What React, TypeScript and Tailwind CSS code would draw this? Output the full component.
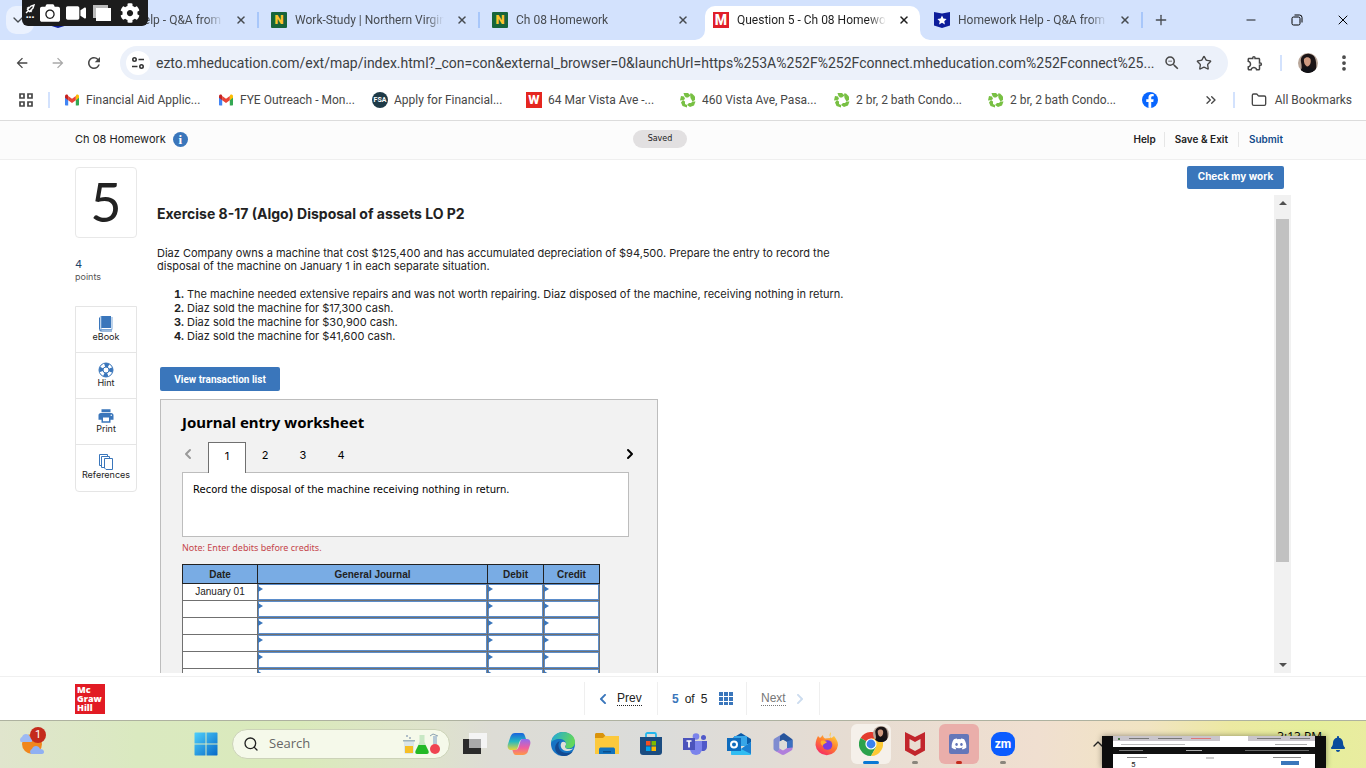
import React, { useState } from 'react';
import { clsx } from 'clsx';
import { ChevronDown, ChevronUp, ChevronsRight, EllipsisVertical, Folder, Minus, Plus, Search, Star, X } from 'lucide-react';
import { FaBell, FaCamera, FaChevronLeft, FaChevronRight, FaCog, FaDiscord, FaFacebookF, FaVideo } from 'react-icons/fa';
import { MdArrowBack, MdArrowForward, MdOutlineExtension, MdPrint, MdRefresh, MdZoomOut } from 'react-icons/md';

/* ---------- favicons and small logos ---------- */

const StarBadge = () => (
  <svg viewBox="0 0 16 16" className="size-4 shrink-0">
    <path d="M0 0l8 1.5L16 0v13.5L8 16l-8-2.5z" fill="#0d1d9b" />
    <path d="M8 3.6l1.4 3 3.2.4-2.3 2.2.6 3.2L8 10.8l-2.9 1.6.6-3.2L3.4 7l3.2-.4z" fill="#fff" />
  </svg>
);

const NovaBadge = () => (
  <span className="flex size-4 shrink-0 items-center justify-center rounded-[1px] bg-[#17653a] text-[13px] leading-4 font-black text-[#fdc52c]">N</span>
);

const McGrawBadge = () => (
  <span className="flex size-4 shrink-0 items-center justify-center bg-[#e01f29] text-[14px] leading-4 font-extrabold text-white">M</span>
);

const Gmail = () => (
  <svg viewBox="0 0 16 16" className="size-4 shrink-0">
    <path d="M1 4.5v8.3c0 .5.3.7.7.7h2.5V7.6z" fill="#4285f4" />
    <path d="M15 4.5v8.3c0 .5-.3.7-.7.7h-2.5V7.6z" fill="#34a853" />
    <path d="M11.8 4v4.2L15 5.8V4.2c0-1.5-1.7-2.2-2.8-1.3z" fill="#fbbc04" />
    <path d="M4.2 8.2V4L8 6.8 11.800 4v4.2L8 11z" fill="#ea4335" />
    <path d="M1 4.2v1.6l3.2 2.4V4l-.4-1.100C2.700 2 1 2.700 1 4.2z" fill="#c5221f" />
  </svg>
);

const Fsa = () => (
  <span className="flex size-4 shrink-0 items-center justify-center rounded-full bg-[#1e3a47] text-[7px] leading-4 font-bold text-white">FSA</span>
);

const RedW = () => (
  <span className="flex size-4 shrink-0 items-center justify-center bg-[#e5261f] text-[13px] leading-4 font-extrabold text-white">W</span>
);

const GreenRing = () => (
  <svg viewBox="0 0 16 16" className="size-4 shrink-0" fill="#78c043">
    <path d="M3.500 1H8l2.500 2.500-2.500 2H6L4.500 4z" />
    <path d="M10 1.500h2l3 3V8l-2.500 1.500L10.500 6z" />
    <path d="M15.500 9.500L14 13.500 10 15l-3-2 2-2h2l1.500-1.500z" />
    <path d="M7 15.500L2.500 14 1 10.500 3 8l2 1.500V12l2 1z" />
    <path d="M0 8.500L1 4l3 .5L5 7 3.500 8z" />
  </svg>
);

const Facebook = () => (
  <span className="flex size-4 shrink-0 items-end justify-center overflow-hidden rounded-full bg-[#0866ff]">
    <FaFacebookF className="size-3.5 text-white" />
  </span>
);

const Avatar = ({ className }: { className: string }) => (
  <svg viewBox="0 0 20 20" className={clsx('rounded-full', className)}>
    <rect width="20" height="20" fill="#b9a79a" />
    <path d="M3 9C2 3 7 0 12 1c6 1 7 8 6 19H2c2-3 2-7 1-11z" fill="#1b1416" />
    <path d="M6 6c2-2.500 5-2 6.500 0 .7 3 0 6.500-3 7.500C7 13 5.500 9.500 6 6z" fill="#cf9a80" />
    <path d="M2 20c0-4 3-6 7-6s8 2 9 6z" fill="#111217" />
  </svg>
);

/* ---------- browser chrome ---------- */

const tabs = [
  { title: 'Homework Help - Q&A from Online', icon: <StarBadge />, active: false },
  { title: 'Work-Study | Northern Virginia Com', icon: <NovaBadge />, active: false },
  { title: 'Ch 08 Homework', icon: <NovaBadge />, active: false },
  { title: 'Question 5 - Ch 08 Homework - C', icon: <McGrawBadge />, active: true },
  { title: 'Homework Help - Q&A from Online', icon: <StarBadge />, active: false },
];

const bookmarks = [
  { label: 'Financial Aid Applic...', icon: <Gmail /> },
  { label: 'FYE Outreach - Mon...', icon: <Gmail /> },
  { label: 'Apply for Financial...', icon: <Fsa /> },
  { label: '64 Mar Vista Ave -...', icon: <RedW /> },
  { label: '460 Vista Ave, Pasa...', icon: <GreenRing /> },
  { label: '2 br, 2 bath Condo...', icon: <GreenRing /> },
  { label: '2 br, 2 bath Condo...', icon: <GreenRing /> },
];

const TabStrip = () => (
  <div className="relative flex h-10 shrink-0 items-stretch bg-[#d3e2fd] text-[#474b50]">
    <button aria-label="Search tabs" className="mt-1.5 ml-1.5 flex size-7 shrink-0 items-center justify-center rounded-[10px] bg-[#eaf1fe]">
      <ChevronDown className="mr-1 size-4" />
    </button>
    <div className="ml-1 flex min-w-0 flex-1 pt-1.5">
      {tabs.map((tab, i) => (
        <div
          key={i}
          className={clsx('relative isolate flex w-[221px] min-w-0 items-center px-3 pb-1.5', tab.active && 'text-[#1f1f1f]')}
        >
          {tab.icon}
          <span className="ml-2 min-w-0 flex-1 overflow-hidden mask-r-from-88% text-xs leading-5 whitespace-nowrap">{tab.title}</span>
          <button aria-label={`Close ${tab.title}`} className="ml-3 shrink-0">
            <X className="size-3" strokeWidth={3} />
          </button>
          {tab.active && (
            <span className="absolute inset-y-0 right-0.5 left-1 -z-10 rounded-t-[10px] bg-white">
              <svg viewBox="0 0 10 10" className="absolute bottom-0 -left-2.5 size-2.5"><path d="M10 0v10H0A10 10 0 0 0 10 0z" fill="#fff" /></svg>
              <svg viewBox="0 0 10 10" className="absolute -right-2.5 bottom-0 size-2.5"><path d="M0 0v10h10A10 10 0 0 1 0 0z" fill="#fff" /></svg>
            </span>
          )}
          {(i === 0 || i === 1 || i === 4) && <span className="absolute top-1.5 right-0 h-4 w-0.5 bg-[#a8c7fa]" />}
        </div>
      ))}
      <button aria-label="New tab" className="flex w-9 shrink-0 items-center justify-center pb-1.5">
        <Plus className="size-4" />
      </button>
    </div>
    <div className="flex shrink-0 text-black">
      <button aria-label="Minimize" className="flex w-[46px] items-center justify-center"><Minus className="size-3.5" strokeWidth={1.5} /></button>
      <button aria-label="Restore" className="flex w-[46px] items-center justify-center">
        <svg viewBox="0 0 12 12" className="size-3" fill="none" stroke="currentColor">
          <rect x="1" y="3" width="8" height="8" rx="1.500" />
          <path d="M3.500 1h5A2.500 2.500 0 0 1 11 3.500v5" />
        </svg>
      </button>
      <button aria-label="Close" className="flex w-[46px] items-center justify-center"><X className="size-4" strokeWidth={1.5} /></button>
    </div>

    {/* floating screen recorder */}
    <div className="absolute top-0 left-[22px] z-10 flex h-[26px] w-[126px] items-center rounded-b-md bg-[#1c1c1c] text-white">
      <span className="flex w-4 flex-col items-center">
        <svg viewBox="0 0 10 10" className="size-2.5" fill="none" stroke="#fff"><path d="M1 9l2-2M2.500 5.500L6 2l3-1-1 3-3.500 3.500zM2 4.500L4 3M5.500 8L7 6" strokeWidth="1.400" /></svg>
        <span className="text-[8px] leading-2 font-bold">•••</span>
      </span>
      <button aria-label="Take photo" className="ml-0.5 flex w-5 justify-center"><FaCamera className="size-5" /></button>
      <button aria-label="Record video" className="ml-1.5 flex w-5 justify-center"><FaVideo className="size-5" /></button>
      <button aria-label="Gallery" className="ml-1.5 flex w-5 justify-center">
        <svg viewBox="0 0 20 18" className="h-[18px] w-5"><path d="M1 1h15v3H4v10H1z" fill="#bbb" /><path d="M4 4h15v13H4z" fill="#fff" /></svg>
      </button>
      <button aria-label="Settings" className="ml-2 flex w-5 justify-center"><FaCog className="size-5" /></button>
    </div>
  </div>
);

const Toolbar = () => (
  <div className="flex h-[46px] shrink-0 items-center bg-white pl-1 text-[#474747]">
    <button aria-label="Back" className="flex w-9 justify-center"><MdArrowBack className="size-4" /></button>
    <button aria-label="Forward" className="flex w-9 justify-center text-[#a9a9a9]"><MdArrowForward className="size-4" /></button>
    <button aria-label="Reload" className="flex w-9 justify-center"><MdRefresh className="size-[18px]" /></button>
    <div className="ml-2 flex h-[34px] min-w-0 flex-1 items-center rounded-full bg-[#ecf1fa] pr-2 pl-1.5">
      <button aria-label="Site information" className="flex size-6 shrink-0 items-center justify-center rounded-full bg-white">
        <svg viewBox="0 0 14 14" className="size-3.5" fill="none" stroke="#333" strokeWidth="1.600">
          <circle cx="3.500" cy="3.500" r="1.700" /><path d="M7.500 3.500H13M1 10.500h5.500" /><circle cx="10.500" cy="10.500" r="1.700" />
        </svg>
      </button>
      <input
        aria-label="Address"
        className="ml-1.5 min-w-0 flex-1 bg-transparent text-sm text-[#3c4043] outline-none"
        defaultValue="ezto.mheducation.com/ext/map/index.html?_con=con&external_browser=0&launchUrl=https%253A%252F%252Fconnect.mheducation.com%252Fconnect%25..."
      />
      <button aria-label="Zoom" className="flex w-8 shrink-0 justify-center"><MdZoomOut className="size-[18px]" /></button>
      <button aria-label="Bookmark this page" className="flex w-8 shrink-0 justify-center"><Star className="size-4" /></button>
    </div>
    <button aria-label="Extensions" className="ml-4 flex w-[22px] justify-center"><MdOutlineExtension className="size-[18px]" /></button>
    <span className="ml-[14px] h-4 w-0.5 bg-[#d3e2fd]" />
    <button aria-label="Profile" className="ml-4"><Avatar className="size-5" /></button>
    <button aria-label="Menu" className="mr-3 ml-4"><EllipsisVertical className="size-5" strokeWidth={2.5} /></button>
  </div>
);

const BookmarkBar = () => (
  <div className="flex h-[34px] shrink-0 items-center bg-white pb-1.5 text-xs text-[#474747]">
    <button aria-label="Apps" className="ml-[18px]">
      <svg viewBox="0 0 16 16" className="size-4" fill="none" stroke="#474747" strokeWidth="1.700"><path d="M2 2h4v4H2zM10 2h4v4h-4zM2 10h4v4H2zM10 10h4v4h-4z" /></svg>
    </button>
    <span className="ml-3.5 h-4 w-0.5 bg-[#d3e2fd]" />
    <div className="ml-3.5 flex min-w-0 flex-1 overflow-hidden">
      {bookmarks.map((item, i) => (
        <a key={i} href="#" className="flex w-[154px] shrink-0 items-center gap-1.5 whitespace-nowrap">
          {item.icon}
          {item.label}
        </a>
      ))}
      <a href="#" aria-label="Facebook"><Facebook /></a>
    </div>
    <button aria-label="More bookmarks"><ChevronsRight className="size-4" /></button>
    <span className="ml-3.5 h-4 w-0.5 bg-[#d3e2fd]" />
    <button className="mr-3.5 ml-4 flex items-center gap-2 whitespace-nowrap">
      <Folder className="size-4" />
      All Bookmarks
    </button>
  </div>
);

/* ---------- assignment ---------- */

const AssignmentHeader = () => (
  <header className="flex h-10 shrink-0 items-center border-t border-b border-t-[#dcdcdc] border-b-[#efefef] bg-[#fcfcfc] px-[75px] pb-0.5 text-[#222]">
    <div className="flex flex-1 items-center gap-[7px] text-[11px]">
      Ch 08 Homework
      <button aria-label="Assignment information" className="flex size-[15px] items-center justify-center rounded-full bg-[#3a76bb] font-['Liberation_Serif',serif] text-[13px] leading-none font-bold text-white">i</button>
    </div>
    <span className="mr-[38px] rounded-full bg-[#e2e0e1] px-[15px] font-['DejaVu_Sans',sans-serif] text-[8px] leading-[18px]">Saved</span>
    <nav className="flex flex-1 items-center justify-end pr-2 text-[10px] font-semibold">
      <a href="#" className="pr-2">Help</a>
      <a href="#" className="border-x border-[#e6e6e6] px-2.5">Save &amp; Exit</a>
      <a href="#" className="pl-2.5 text-[#124a8a]">Submit</a>
    </nav>
  </header>
);

const EbookIcon = () => (
  <svg viewBox="0 0 16 16" className="size-4"><path d="M3 0h10v12H3z" fill="#3a76bb" /><path d="M3 0v15M2 13.500h12V1" fill="none" stroke="#7fa9d8" /><path d="M1.500 1.500v12a1.500 1.500 0 0 0 1.500 1.500h11" fill="none" stroke="#3a76bb" /></svg>
);
const HintIcon = () => (
  <svg viewBox="0 0 16 16" className="size-4" fill="none" stroke="#3a76bb">
    <circle cx="8" cy="8" r="7" strokeWidth="1" /><circle cx="8" cy="8" r="3" strokeWidth="1" />
    <circle cx="8" cy="8" r="5" strokeWidth="4" strokeDasharray="3.927 3.927" transform="rotate(-22.5 8 8)" />
  </svg>
);
const ReferencesIcon = () => (
  <svg viewBox="0 0 16 16" className="size-4" stroke="#3a76bb" fill="#fff"><path d="M1.500.5h8v11h-8z" /><path d="M3.500 2.500h8v11h-8z" /><path d="M6.500 4.500H14.500v11h-6.500l-1.500-1.500z" /></svg>
);

const tools = [
  { label: 'eBook', icon: <EbookIcon /> },
  { label: 'Hint', icon: <HintIcon /> },
  { label: 'Print', icon: <MdPrint className="size-[18px] text-[#3a76bb]" /> },
  { label: 'References', icon: <ReferencesIcon /> },
];

const QuestionSidebar = () => (
  <aside className="w-[62px] shrink-0 pt-[7px] text-[#222]">
    <div className="flex h-[71px] items-center justify-center rounded border border-[#e8e8e8] pb-0.5 font-['Lato',sans-serif] text-[54px] leading-none">5</div>
    <div className="mt-5 text-[11px] leading-3 text-[#1d4268]">4</div>
    <div className="text-[9px] leading-[14px] text-[#555]">points</div>
    <div className="mt-[22px] rounded-b border border-[#e5e5e5]">
      {tools.map((tool) => (
        <button key={tool.label} className="flex h-[46px] w-full flex-col items-center justify-center border-b border-[#e5e5e5] pb-0.5 text-[9px] leading-[10px] last:border-b-0">
          <span className="flex h-4 items-center">{tool.icon}</span>
          {tool.label}
        </button>
      ))}
    </div>
  </aside>
);

const situations = [
  'The machine needed extensive repairs and was not worth repairing. Diaz disposed of the machine, receiving nothing in return.',
  'Diaz sold the machine for $17,300 cash.',
  'Diaz sold the machine for $30,900 cash.',
  'Diaz sold the machine for $41,600 cash.',
];

const columns = ['General Journal', 'Debit', 'Credit'];
const rows = ['January 01', '', '', '', '', ''];

const EntryCell = ({ label }: { label: string }) => (
  <td className="border border-[#707070] p-0">
    <div className="relative">
      <input aria-label={label} className="block h-4 w-full border border-[#5b8dcb] bg-white px-2 text-[9px] outline-none" />
      <svg viewBox="0 0 5 6" className="absolute top-0.5 left-0 h-1.5 w-[5px]"><path d="M0 0l5 3-5 3z" fill="#3a76bb" /></svg>
    </div>
  </td>
);

const Worksheet = () => {
  const [step, setStep] = useState(1);

  return (
    <section className="mt-2 ml-[3px] w-[498px] border border-[#bdbdbd] bg-[#f2f2f2] px-[21px] pt-[11px]">
      <h3 className="font-['Noto_Sans',sans-serif] text-[15px] leading-[22px] font-bold text-black">Journal entry worksheet</h3>
      <div className="mt-[9px] flex h-[30px] items-center text-[11px] text-black">
        <button aria-label="Previous entry" className="w-[26px] pb-1.5 text-[#9a9a9a]"><ChevronDown className="-ml-0.5 size-4 rotate-90" strokeWidth={3} /></button>
        {[1, 2, 3, 4].map((n) => (
          <button
            key={n}
            onClick={() => setStep(n)}
            className={clsx(
              'w-[38px] pb-1',
              step === n && 'relative -mb-px h-[31px] border border-b-0 border-[#707070] bg-white'
            )}
          >
            {n}
          </button>
        ))}
        <button aria-label="Next entry" className="-mr-0.5 ml-auto pb-1.5"><ChevronDown className="size-4 -rotate-90" strokeWidth={3} /></button>
      </div>
      <div className="mr-[7px] h-[65px] border border-[#bdbdbd] bg-white px-2.5 pt-2.5 font-['DejaVu_Sans',sans-serif] text-[10px] leading-[14px] text-black">
        Record the disposal of the machine receiving nothing in return.
      </div>
      <p className="mt-1 font-['Noto_Sans',sans-serif] text-[9px] leading-[14px] text-[#c5464b]">Note: Enter debits before credits.</p>
      <table className="mt-[9px] w-[418px] table-fixed border-collapse border border-[#707070] font-['Liberation_Sans',sans-serif] text-[10px] text-[#222]">
        <thead>
          <tr className="h-[19px] bg-[#79ace4]">
            <th className="w-[75px] border border-[#222] p-0 font-bold">Date</th>
            {columns.map((name, i) => (
              <th key={name} className={clsx('border border-[#222] p-0 font-bold', i > 0 && 'w-14')}>{name}</th>
            ))}
          </tr>
        </thead>
        <tbody>
          {rows.map((date, i) => (
            <tr key={i}>
              <td className="border border-[#707070] bg-white p-0 text-center leading-4">{date}</td>
              {columns.map((name) => (
                <EntryCell key={name} label={`${name}, row ${i + 1}`} />
              ))}
            </tr>
          ))}
        </tbody>
      </table>
    </section>
  );
};

const Question = () => (
  <main className="flex min-h-0 flex-1 bg-white px-[75px]">
    <QuestionSidebar />
    <div className="ml-5 flex min-h-0 min-w-0 flex-1 flex-col pb-[3px]">
      <div className="flex h-[35px] shrink-0 items-start justify-end pt-1.5 pr-[7px]">
        <button className="h-[23px] w-[97px] rounded-xs bg-[#3a76bb] pb-0.5 text-[10px] font-bold text-white">Check my work</button>
      </div>
      <div className="flex min-h-0 flex-1">
        <div className="min-w-0 flex-1 overflow-hidden pt-[9px] text-[#222]">
          <h2 className="text-sm leading-5 font-bold">Exercise 8-17 (Algo) Disposal of assets LO P2</h2>
          <p className="mt-[23px] max-w-[700px] text-[11px] leading-[13px]">
            Diaz Company owns a machine that cost $125,400 and has accumulated depreciation of $94,500. Prepare the entry to record the disposal of the machine on January 1 in each separate situation.
          </p>
          <ol className="mt-[14px] ml-[30px] list-outside list-decimal text-[11px] leading-[14px] marker:font-bold">
            {situations.map((text) => (
              <li key={text}>{text}</li>
            ))}
          </ol>
          <button className="mt-6 ml-[3px] block h-6 w-[120px] rounded-xs bg-[#3a76bb] font-['Roboto',sans-serif] text-[10px] font-bold text-white">View transaction list</button>
          <Worksheet />
        </div>
        <div className="flex w-[17px] shrink-0 flex-col items-center bg-[#f1f1f1] py-1.5">
          <svg viewBox="0 0 8 4" className="h-1 w-2"><path d="M4 0l4 4H0z" fill="#505050" /></svg>
          <div className="mt-3.5 h-[343px] w-[13px] bg-[#c1c1c1]" />
          <svg viewBox="0 0 8 4" className="mt-auto h-1 w-2"><path d="M0 0h8L4 4z" fill="#505050" /></svg>
        </div>
      </div>
    </div>
  </main>
);

const AssignmentFooter = () => (
  <footer className="flex h-11 shrink-0 items-center border-t border-[#f0f0f0] bg-white px-[75px] font-['Liberation_Sans',sans-serif] text-xs text-[#222]">
    <div className="flex-1">
      <div className="flex size-[30px] flex-col justify-center bg-[#e21b24] pl-0.5 font-['Open_Sans',sans-serif] text-[9px] leading-[9px] font-extrabold text-white">
        <span>Mc</span>
        <span>Graw</span>
        <span>Hill</span>
      </div>
    </div>
    <nav className="ml-[38px] flex h-[33px] divide-x divide-[#efefef] border-x border-[#efefef]">
      <button className="flex w-[73px] items-center gap-2 pl-3">
        <FaChevronLeft className="size-3 text-[#3a76bb]" />
        <span className="border-b border-dotted border-[#222] leading-[14px]">Prev</span>
      </button>
      <div className="flex w-[89px] items-center gap-1.5 pl-3.5">
        <b className="text-[#3a76bb]">5</b> of <span>5</span>
        <button aria-label="Question list" className="ml-1.5">
          <svg viewBox="0 0 14 14" className="size-3.5" fill="#3a76bb"><path d="M0 0h4v4H0zM5 0h4v4H5zM10 0h4v4h-4zM0 5h4v4H0zM5 5h4v4H5zM10 5h4v4h-4zM0 10h4v3H0zM5 10h4v3H5zM10 10h4v3h-4z" /></svg>
        </button>
      </div>
      <button className="flex w-[72px] items-center gap-2 pl-3.5 text-[#777]">
        <span className="border-b border-dotted border-[#777] leading-[14px]">Next</span>
        <FaChevronRight className="size-3 text-[#ccdcef]" />
      </button>
    </nav>
    <div className="flex-1" />
  </footer>
);

/* ---------- taskbar ---------- */

const TaskView = () => (
  <svg viewBox="0 0 24 24" className="size-6"><path d="M6 1h18v15H6z" fill="#f4f4f4" /><path d="M0 7h18v15H0z" fill="#2b2b2b" /><path d="M6 7h12v9H6z" fill="#aaa" /></svg>
);

const Copilot = () => (
  <svg viewBox="0 0 24 24" className="size-6">
    <defs>
      <linearGradient id="copA" x1="0" y1="0" x2="0" y2="1"><stop stopColor="#1a63dd" /><stop offset=".5" stopColor="#26b8c0" /><stop offset="1" stopColor="#e8d53a" /></linearGradient>
      <linearGradient id="copB" x1="0" y1="0" x2="0" y2="1"><stop stopColor="#8f6bf0" /><stop offset=".55" stopColor="#ee5fa0" /><stop offset="1" stopColor="#ff9a45" /></linearGradient>
    </defs>
    <path d="M8 1h7c2 0 2.500 1.500 3 3l1 3h-3c-2 0-3 1-4 4l-1.500 5C10 18 9 18 7 18H4c-3 0-4-3-3-6l2.500-7.500C4.500 2 6 1 8 1z" fill="url(#copA)" />
    <path d="M16 23H9c-2 0-2.500-1.500-3-3l-.6-2H8c2 0 3-1 4-4l1.500-5C14 7 15 7 17 7h3c3 0 4 3 3 6l-2.500 7.500C19.500 22 18 23 16 23z" fill="url(#copB)" />
  </svg>
);

const Edge = () => (
  <svg viewBox="0 0 24 24" className="size-6">
    <defs>
      <linearGradient id="edgeA" x1="0" y1="0" x2="1" y2=".3"><stop stopColor="#1fa7e0" /><stop offset="1" stopColor="#63d75a" /></linearGradient>
    </defs>
    <circle cx="12" cy="12" r="12" fill="#1573c4" />
    <path d="M0 11C1 4 6 0 12 0c8 0 12 5.500 12 10 0 4-3 6.500-6.500 6.500-2 0-3.500-.7-3.500-1.600 0-.7 1-1 1-2.900C15 9 12 7 8.500 7 4 7 1 9 0 11z" fill="url(#edgeA)" />
    <path d="M9 9c-3 3-2 12 7 12 2.500 0 4.500-.6 6-1.700C19 24 13 25 9 23 2 20 3 11 9 9z" fill="#134a91" />
    <path d="M10.500 10.500c-2.500 4 1 9 6 8.500 3 0 5-1.500 6.500-3-2 1.300-9 2-9-1.300 0-1 1-1.200 1-2.700 0-2-3-3-4.500-1.500z" fill="#dfe0d9" />
  </svg>
);

const Explorer = () => (
  <svg viewBox="0 0 24 24" className="size-6"><path d="M0 2.500C0 1.700.6 1 1.500 1H8l2.500 3H22v5H0z" fill="#d9930c" /><path d="M0 6h8l2-2h14v18H0z" fill="#fcc93c" /><path d="M4 17.500c0-1.500 1-2 2-2h12c1 0 2 .5 2 2V22H4z" fill="#1272bd" /><path d="M8 19h8v1.500H8z" fill="#0a4d8c" /></svg>
);

const Store = () => (
  <svg viewBox="0 0 24 24" className="size-6"><path d="M7 6V2.500C7 1.600 7.600 1 8.500 1h7c.9 0 1.500.6 1.500 1.500V6" fill="none" stroke="#22b7ee" strokeWidth="1.800" /><path d="M1 5h22v15c0 2-1 3-3 3H4c-2 0-3-1-3-3z" fill="#1b4c80" /><path d="M7 9h4.500v4.500H7z" fill="#f25022" /><path d="M12.500 9H17v4.500h-4.500z" fill="#7fba00" /><path d="M7 14.500h4.500V19H7z" fill="#00a4ef" /><path d="M12.500 14.500H17V19h-4.500z" fill="#ffb900" /></svg>
);

const Teams = () => (
  <svg viewBox="0 0 24 24" className="size-6"><circle cx="13" cy="4.500" r="3.300" fill="#7b83eb" /><circle cx="20.500" cy="5.500" r="2.500" fill="#5059c9" /><path d="M16 9h8v6a4 4 0 0 1-6 3.500z" fill="#5059c9" /><path d="M7 9h12v8a6 6 0 0 1-12 0z" fill="#7b83eb" /><path d="M0 6h12v12H0z" fill="#4b53bc" /><path d="M3.500 9h5M6 9v6.500" stroke="#fff" strokeWidth="1.700" /></svg>
);

const Outlook = () => (
  <svg viewBox="0 0 24 24" className="size-6"><path d="M4 7l10-6 10 6v5H4z" fill="#0a5ba8" /><path d="M7 4h13v10H7z" fill="#37a6e8" /><path d="M4 11l10 6 10-7v12c0 .6-.4 1-1 1H5c-.6 0-1-.4-1-1z" fill="#31bdf2" /><path d="M14 17l10-7v12z" fill="#1b7fd1" /><path d="M0 6h14v13H0z" fill="#0f6cbd" /><circle cx="7" cy="12.500" r="3" fill="none" stroke="#fff" strokeWidth="2" /></svg>
);

const Microsoft365 = () => (
  <svg viewBox="0 0 24 24" className="size-6">
    <path d="M13 1L4 6.200C3 6.800 2.500 7.500 2.500 8.500v8c0 1 .5 1.600 1.500 2.200l1.500.8c2 0 3-1 3-3V9.500L16 5z" fill="#7f8cd0" />
    <path d="M12 1.500L9 4v5.500L12 8l4 2.500v6l5.500-1V8.500c0-1-.5-1.700-1.500-2.300L13.500 1.500z" fill="#27559c" />
    <path d="M21.500 14v2.500c0 1-.5 1.700-1.500 2.200l-6.500 3.800c-1 .6-2 .6-3 0L4 18.700c2 1 4.500 0 4.500-2.200l3.500 2 4-2.500z" fill="#b07fdc" />
    <path d="M8.500 9.700L12 7.700l4 2.300v5.500l-4 2.500-3.500-2z" fill="#dddcd8" />
    <path d="M16 9.500l5.500-2v8L16 16z" fill="#3b6fc0" />
  </svg>
);

const Firefox = () => (
  <svg viewBox="0 0 24 24" className="size-6">
    <defs><linearGradient id="ffA" x1=".8" y1="0" x2=".2" y2="1"><stop stopColor="#ffe03d" /><stop offset=".5" stopColor="#ff7b2e" /><stop offset="1" stopColor="#f5226b" /></linearGradient></defs>
    <path d="M16 0c-2 2-2 4 0 6 2-1 2-1 3-2 2 3 4 5 4 9a11.300 11.300 0 0 1-22.500 0C.5 9 2 6 3 4l2 2 3-3c0 1.500.5 2.500 2 3.500L15 6z" fill="url(#ffA)" />
    <circle cx="12.500" cy="13" r="4.800" fill="#7b3be0" /><path d="M6 9c2-1 4 0 6 1-1 2-4 1-4 4-2-1-3-3-2-5z" fill="#ffb02e" />
  </svg>
);

const Chrome = () => (
  <span className="relative">
    <svg viewBox="0 0 24 24" className="size-6"><path d="M12 12L1.600 6A12 12 0 0 1 22.400 6z" fill="#e33b2e" /><path d="M12 12L1.600 6A12 12 0 0 0 12 24l5-9z" fill="#2ba24c" /><path d="M12 12l10.400-6A12 12 0 0 1 12 24l5.200-9z" fill="#fcc934" /><path d="M12 6.500h10.600L12 12z" fill="#fcc934" /><circle cx="12" cy="12" r="5.600" fill="#fff" /><circle cx="12" cy="12" r="4.400" fill="#3b82f0" /></svg>
    <Avatar className="absolute -top-1.5 -right-1.5 size-4" />
  </span>
);

const McAfee = () => (
  <svg viewBox="0 0 24 24" className="size-6"><path d="M2 0l10 5L22 0v18.500L12 24 2 18.500zM6.500 7v9L12 19l5.500-3V7L12 10z" fill="#c2252c" fillRule="evenodd" /></svg>
);

const Discord = () => (
  <span className="flex size-5 items-center justify-center rounded-xs bg-[#6577b9]"><FaDiscord className="size-4 text-white" /></span>
);

const Zoom = () => (
  <span className="flex size-6 items-center justify-center rounded-[9px] bg-[#0b5cff] text-[12px] leading-none font-bold text-white">zm</span>
);

const apps = [
  { name: 'Task view', icon: <TaskView /> },
  { name: 'Copilot', icon: <Copilot /> },
  { name: 'Edge', icon: <Edge /> },
  { name: 'File Explorer', icon: <Explorer /> },
  { name: 'Store', icon: <Store /> },
  { name: 'Teams', icon: <Teams /> },
  { name: 'Outlook', icon: <Outlook /> },
  { name: 'Microsoft 365', icon: <Microsoft365 /> },
  { name: 'Firefox', icon: <Firefox /> },
  { name: 'Chrome', icon: <Chrome />, box: 'bg-[#f5f0ea]', dot: 'w-4 bg-[#0a78d4]' },
  { name: 'McAfee', icon: <McAfee />, dot: 'w-1.5 bg-[#8a857c]' },
  { name: 'Discord', icon: <Discord />, box: 'bg-[#eaaeaa]', dot: 'w-1.5 bg-[#c42b1c]' },
  { name: 'Zoom', icon: <Zoom />, dot: 'w-1.5 bg-[#8a857c]' },
];

const WindowPreview = () => (
  <div className="absolute right-10 bottom-0 h-8 w-56 overflow-hidden bg-[#0d0d0d] px-[11px] shadow-[0_0_6px_#0006]">
    <div className="h-full bg-white">
      <div className="flex h-[5px] items-center justify-around bg-[#c9c5cb]">
        <span className="size-0.5 bg-[#4b7a4b]" />
        <span className="h-px w-5 bg-[#777]" />
        <span className="h-px w-6 bg-[#777]" />
        <span className="h-px w-5 bg-[#d77]" />
        <span className="h-[5px] w-7 bg-white" />
        <span className="h-px w-6 bg-[#777]" />
        <span className="h-px w-5 bg-[#777]" />
      </div>
      <div className="flex h-[6px] items-center justify-between px-2">
        <span className="h-px w-16 bg-[#bbb]" />
        <span className="h-px w-8 bg-[#aaa]" />
      </div>
      <div className="flex h-[7px] items-center justify-between bg-[#111] px-1.5">
        <span className="h-px w-6 bg-[#777]" />
        <span className="h-px w-4 bg-[#aaa]" />
        <span className="h-px w-16 bg-[#666]" />
      </div>
      <div className="flex h-[7px] items-center justify-between px-3.5">
        <span className="h-px w-5 bg-[#888]" />
        <span className="h-0.5 w-2 bg-[#ccc]" />
        <span className="h-px w-7 bg-[#888]" />
      </div>
      <div className="flex items-start justify-between px-4">
        <span className="pl-0.5 text-[8px] leading-2 text-[#222]">5</span>
        <span className="h-1 w-[18px] bg-[#3a76bb]" />
      </div>
    </div>
  </div>
);

const Taskbar = () => (
  <div className="relative flex h-12 shrink-0 items-center border-t border-[#aeb2a0] bg-[linear-gradient(90deg,#e0e5cd_0%,#dae9c0_10%,#daeabb_22%,#dee3cb_31%,#dddcd5_36%,#dbdcda_48%,#e6dcd2_62%,#f0dfd0_76%,#f1e4c2_84%,#ece9a2_90%,#e5ef9b_96%,#e9eca0_100%)] pb-0.5 text-[#222]">
    <div className="flex w-[184px] shrink-0 pl-5">
      <button aria-label="Weather, 1 alert" className="relative">
        <svg viewBox="0 0 26 26" className="size-[26px]"><circle cx="12" cy="13" r="10" fill="#f0861c" /><path d="M1 11a3 3 0 0 1 1-5c1-4 7-4 8 0 3 0 4 4 1 5z" fill="#9db9f3" /><path d="M11 23a3 3 0 0 1 1-5c1-4 7-4 8 0 5 0 5 5 2 5z" fill="#8fb0f2" /></svg>
        <span className="absolute -top-1 right-0 size-4 rounded-full bg-[#c42b1c] text-center text-[11px] leading-4 text-white">1</span>
      </button>
    </div>
    <button aria-label="Start" className="flex w-11 shrink-0 justify-center">
      <svg viewBox="0 0 24 24" className="size-6">
        <defs><linearGradient id="win" x1="0" y1="0" x2="1" y2="1"><stop stopColor="#4fd0fb" /><stop offset="1" stopColor="#0669c8" /></linearGradient></defs>
        <path d="M1 .5h10.500v11H.5V1zM12.500.5H23l.5.5v10.500h-11zM.5 12.500h11v11H1l-.5-.5zM12.500 12.500h11V23l-.5.5H12.500z" fill="url(#win)" />
      </svg>
    </button>
    <label className="ml-1 flex h-[30px] w-[218px] items-center rounded-full border border-[#ccd3b8] bg-[#f5f9ea] pr-2 pl-2.5">
      <Search className="size-4 shrink-0" />
      <input aria-label="Search" placeholder="Search" className="ml-2.5 min-w-0 flex-1 bg-transparent font-['Open_Sans',sans-serif] text-[13px] outline-none placeholder:text-[#666]" />
      <svg viewBox="0 0 40 22" className="h-[22px] w-10 shrink-0">
        <path d="M3 8h10v11a2 2 0 0 1-2 2H5a2 2 0 0 1-2-2z" fill="#dbe6ea" /><path d="M4 13h8v7H4z" fill="#f6bf26" /><path d="M2 7h12v1.500H2z" fill="#9fb4bd" />
        <circle cx="6" cy="3" r="1" fill="#9ab" /><circle cx="9" cy="5" r="1" fill="#9ab" />
        <path d="M18.500 2h5v7l4 9c.5 2 0 3-2 3h-9c-2 0-2.500-1-2-3l4-9z" fill="#c8e8c4" /><path d="M17.500 12h7l3 6c.5 2 0 3-2 3h-9c-2 0-2.500-1-2-3z" fill="#22b926" />
        <path d="M32 3h4v8h-4z" fill="#b5c8d6" /><circle cx="34" cy="16" r="5" fill="#ef4452" /><path d="M29 3l3-2 5 2" stroke="#8aa0b0" fill="none" />
      </svg>
    </label>
    <div className="ml-[3px] flex min-w-0 flex-1">
      {apps.map((app) => (
        <button key={app.name} aria-label={app.name} className="flex w-11 shrink-0 justify-center">
          <span className={clsx('relative flex size-10 items-center justify-center rounded-md', app.box)}>
            {app.icon}
            {app.dot && <span className={clsx('absolute bottom-0 h-[3px] rounded-full', app.dot)} />}
          </span>
        </button>
      ))}
    </div>
    <button aria-label="Show hidden icons" className="mr-[22px] w-4"><ChevronUp className="size-4" /></button>
    <div className="flex h-full w-[194px] shrink-0 items-start justify-end pt-2 font-['Open_Sans',sans-serif] text-xs leading-4 text-black">3:13 PM</div>
    <button aria-label="Notifications" className="mr-5 ml-2 text-[#0a4c9c]"><FaBell className="size-4" /></button>
    <WindowPreview />
  </div>
);

export default function App() {
  return (
    <div className="flex h-screen flex-col overflow-hidden bg-white font-['Roboto','Noto_Sans',sans-serif]">
      <TabStrip />
      <Toolbar />
      <BookmarkBar />
      <div className="flex min-h-0 flex-1 flex-col font-['Inter','Open_Sans',sans-serif]">
        <AssignmentHeader />
        <Question />
        <AssignmentFooter />
      </div>
      <Taskbar />
    </div>
  );
}
